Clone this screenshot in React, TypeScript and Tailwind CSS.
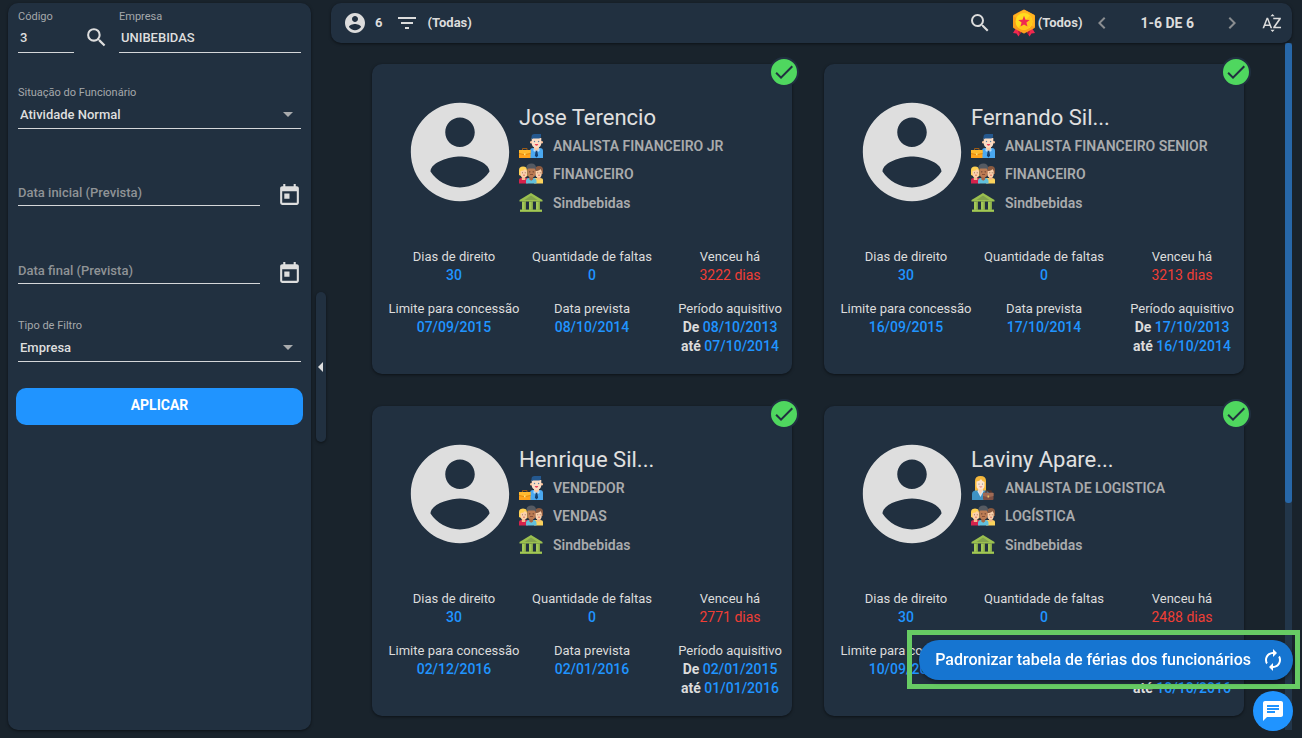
import React from "react";
import {
  MdArrowDropDown,
  MdArrowLeft,
  MdAutorenew,
  MdChat,
  MdCheck,
  MdChevronLeft,
  MdChevronRight,
  MdFilterList,
  MdSearch,
  MdSortByAlpha,
  MdToday,
} from "react-icons/md";

type Employee = {
  name: string;
  role: string;
  female?: boolean;
  department: string;
  overdue: string;
  limit: string;
  planned: string;
  from: string;
  to: string;
};

const employees: Employee[] = [
  { name: "Jose Terencio", role: "ANALISTA FINANCEIRO JR", department: "FINANCEIRO", overdue: "3222 dias", limit: "07/09/2015", planned: "08/10/2014", from: "08/10/2013", to: "07/10/2014" },
  { name: "Fernando Sil...", role: "ANALISTA FINANCEIRO SENIOR", department: "FINANCEIRO", overdue: "3213 dias", limit: "16/09/2015", planned: "17/10/2014", from: "17/10/2013", to: "16/10/2014" },
  { name: "Henrique Sil...", role: "VENDEDOR", department: "VENDAS", overdue: "2771 dias", limit: "02/12/2016", planned: "02/01/2016", from: "02/01/2015", to: "01/01/2016" },
  { name: "Laviny Apare...", role: "ANALISTA DE LOGISTICA", female: true, department: "LOGÍSTICA", overdue: "2488 dias", limit: "10/09/2017", planned: "11/10/2016", from: "11/10/2015", to: "10/10/2016" },
];

function AccountIcon({ size }: { size: number }) {
  return (
    <svg viewBox="0 0 24 24" width={size} height={size} fill="currentColor" className="shrink-0" aria-hidden="true">
      <path d="M12 2C6.480 2 2 6.480 2 12s4.480 10 10 10 10-4.480 10-10S17.520 2 12 2zm0 3c1.660 0 3 1.340 3 3s-1.340 3-3 3-3-1.340-3-3 1.340-3 3-3zm0 14.200c-2.500 0-4.710-1.280-6-3.220.030-1.990 4-3.080 6-3.080 1.990 0 5.970 1.090 6 3.080-1.290 1.940-3.500 3.220-6 3.220z" />
    </svg>
  );
}

function BusinessmanIcon() {
  return (
    <svg viewBox="0 0 24 24" className="size-6 shrink-0" aria-hidden="true">
      <path d="M11 24v-7q0-3 3-3h7q3 0 3 3v7z" fill="#4aa8f0" />
      <path d="M15 12h5v3l-2.500 2.500L15 15z" fill="#f7c9a5" />
      <path d="M14.500 14.500l3 2.500 3-2.500v2.500l-3 1.500-3-1.500z" fill="#b5dcfb" />
      <path d="M16.700 16.800h1.600l.8 5-1.600 1.800-1.600-1.800z" fill="#17406e" />
      <circle cx="12.200" cy="8.300" r="1.200" fill="#f7bd94" />
      <circle cx="22.800" cy="8.300" r="1.200" fill="#f7bd94" />
      <path d="M12.700 4h9.600v5q0 4.800-4.800 4.800T12.700 9z" fill="#fbdcc4" />
      <path d="M12.500 5.500V3Q12.500 0 15.500 0H22v2.500Q22 4.500 20 4.500h-6z" fill="#24588f" />
      <circle cx="15.500" cy="7.500" r=".7" fill="#5c7f9e" />
      <circle cx="19.600" cy="7.500" r=".7" fill="#5c7f9e" />
      <path d="M15.700 10h3.600q-.3 1.800-1.800 1.800T15.700 10z" fill="#e8445a" />
      <path d="M3.500 16v-1.500h4.500V16" fill="none" stroke="#9c5b16" />
      <rect y="16" width="11.500" height="8" fill="#ffa31c" />
      <path d="M0 16h11.500v3L6 20.500 0 19z" fill="#ffb92e" />
      <path d="M0 19.500l5.500 1.200 6-1.200" fill="none" stroke="#d67f08" strokeWidth=".7" />
      <rect x="5" y="19.500" width="1.500" height="1.800" fill="#ffe27a" />
    </svg>
  );
}

function BusinesswomanIcon() {
  return (
    <svg viewBox="0 0 24 24" className="size-6 shrink-0" aria-hidden="true">
      <path d="M4 15V5q0-5 5.500-5T15 5v10z" fill="#f5b83d" />
      <path d="M1 24v-6q0-3.500 4-3.500h9q4 0 4 3.500v6z" fill="#3e92c4" />
      <path d="M7 12h5v3l-2.500 4L7 15z" fill="#fbd3b2" />
      <path d="M5.500 5.500Q9 5 10 3q1 2.500 3.500 3v3.500q0 4-4 4t-4-4z" fill="#fde3cd" />
      <path d="M7.500 14.500l2 4 2-4 1.200.5-3.200 6-3.200-6z" fill="#dceaf2" />
      <circle cx="8" cy="8" r=".6" fill="#69808c" />
      <circle cx="11.500" cy="8" r=".6" fill="#69808c" />
      <path d="M8 10.500h3.500q-1.700 2-3.500 0z" fill="#e75f68" />
      <path d="M15 17v-2h5v2" fill="none" stroke="#5a3427" strokeWidth="1.200" />
      <rect x="12" y="16.500" width="10.500" height="7.500" rx="1" fill="#805044" />
      <path d="M12 17h10.500v3l-5.200 1.200L12 20z" fill="#a06a55" />
      <rect x="16.500" y="19.500" width="1.600" height="2" fill="#e9c46a" />
    </svg>
  );
}

function TeamIcon() {
  return (
    <svg viewBox="0 0 24 24" className="size-6 shrink-0" aria-hidden="true">
      <path d="M0 21.500V18q0-2 3-2h6v5.500z" fill="#d6224c" />
      <path d="M15 21.500V16h6q3 0 3 2v3.500z" fill="#fbd25c" />
      <path d="M0 13V8q0-3.500 4-3.500T8.500 8v6q-4 2-8.500-1z" fill="#ffd153" />
      <rect x="2.800" y="14" width="3.500" height="4" fill="#f7b98c" />
      <path d="M1.500 9Q5 9 6 7l2 2v3q0 3.500-3.200 3.500T1.500 12z" fill="#fbd0ab" />
      <path d="M16 12V8q0-4 4-4t4 4v4z" fill="#8a5a40" />
      <rect x="18" y="13.500" width="3.500" height="4" fill="#f2b284" />
      <path d="M16.300 9q4 0 5-2l1.400 2v3q0 3.500-3.200 3.500T16.300 12z" fill="#fbd0ab" />
      <path d="M7 21.500V19q0-3 3-3h4q3.500 0 3.500 3v2.500z" fill="#62c0dc" />
      <path d="M10.300 14h3.800v3.500l-1.900 1.300-1.900-1.300z" fill="#a86743" />
      <path d="M8.500 5h8v6q0 4.500-4 4.500t-4-4.500z" fill="#bb7b53" />
      <path d="M7.500 7.500V5Q8 1.500 12.500 1.500T17 6v2l-1.500-1.500h-6z" fill="#555a62" />
      <circle cx="10.800" cy="9.800" r=".6" fill="#4e3029" />
      <circle cx="14.200" cy="9.800" r=".6" fill="#4e3029" />
      <path d="M11 12.500h3" stroke="#7a4330" strokeWidth=".8" />
      <circle cx="3.500" cy="10.800" r=".5" fill="#7b5b4b" />
      <circle cx="6.200" cy="10.800" r=".5" fill="#7b5b4b" />
      <circle cx="18.800" cy="10.800" r=".5" fill="#7b5b4b" />
      <circle cx="21.200" cy="10.800" r=".5" fill="#7b5b4b" />
      <path d="M4 13.200h2M19 13.200h2" stroke="#d65e52" strokeWidth=".8" />
    </svg>
  );
}

function UnionIcon() {
  return (
    <svg viewBox="0 0 24 24" className="size-6 shrink-0" aria-hidden="true">
      <path d="M12 2l11.500 7v1.500H.5V9z" fill="#9bc04f" />
      <path d="M12 4.500L18.500 9h-13z" fill="#82a24c" />
      <path d="M3 10.500h4V19H3zM10 10.500h4V19h-4zM17 10.500h4V19h-4z" fill="#a3c957" />
      <path d="M5.500 10.500H7V19H5.500zM12.500 10.500H14V19h-1.500zM19.500 10.500H21V19h-1.500z" fill="#87a849" />
      <path d="M1 18.500h22V21H1z" fill="#8db14a" />
      <path d="M1 19.500h22" stroke="#a8ce5b" strokeWidth=".8" />
    </svg>
  );
}

function MedalIcon() {
  return (
    <svg viewBox="0 0 24 28" className="h-7 w-6 shrink-0" aria-hidden="true">
      <path d="M4 19L1 24l3.500.5L6.500 27.500l3.500-6zM20 19l3 5-3.500.5-2 3-3.500-6z" fill="#f0284f" />
      <path d="M5.500 20.500L9 23l-1.500 3zM18.500 20.500L15 23l1.500 3z" fill="#b5163a" />
      <path d="M12 2l9.500 5v11L12 23l-9.500-5V7z" fill="#fb9f1c" stroke="#fb9f1c" strokeWidth="3" strokeLinejoin="round" />
      <path d="M12 2l9.500 5v9.500L3 7z" fill="#ffb421" stroke="#ffb421" strokeWidth="2" strokeLinejoin="round" />
      <circle cx="12" cy="12.500" r="8.500" fill="#ffdc1e" />
      <path d="M18 6.500A8.500 8.500 0 0 1 6 18.500z" fill="#ffc61a" />
      <path d="M12 6.800l1.500 3.900 4.200.2-3.300 2.700 1.100 4-3.500-2.200-3.500 2.200 1.100-4-3.300-2.700 4.200-.2z" fill="#f02a50" />
    </svg>
  );
}

function Stat({ label, children }: { label: string; children: React.ReactNode }) {
  return (
    <div>
      <dt className="text-[13px] leading-[18px] whitespace-nowrap text-[#dcdcdc]">{label}</dt>
      <dd className="text-sm leading-[19px] font-medium text-[#2094ff]">{children}</dd>
    </div>
  );
}

function EmployeeCard({ employee }: { employee: Employee }) {
  return (
    <article className="relative h-[310px] w-[420px] rounded-[10px] bg-[#213040] pt-[29px] shadow-[0_1px_3px_rgba(0,0,0,0.5)]">
      <span className="absolute -top-[7px] -right-[7px] flex size-[30px] items-center justify-center rounded-full border-2 border-[#213040] bg-[#4fd75f] text-[#213040]">
        <MdCheck size={24} />
      </span>
      <div className="flex pl-[29px]">
        <span className="text-[#dedede]">
          <AccountIcon size={118} />
        </span>
        <div className="pt-[11px]">
          <h2 className="text-[22px] leading-[28px] text-[#e0e0e0]">{employee.name}</h2>
          <ul className="text-sm font-semibold text-[#a9abad]">
            <li className="flex h-7 items-center gap-[10px]">
              {employee.female ? <BusinesswomanIcon /> : <BusinessmanIcon />}
              {employee.role}
            </li>
            <li className="flex h-7 items-center gap-[10px]">
              <TeamIcon />
              {employee.department}
            </li>
            <li className="flex h-[30px] items-center gap-[10px]">
              <UnionIcon />
              Sindbebidas
            </li>
          </ul>
        </div>
      </div>
      <dl className="mt-[30px] grid grid-cols-[138px_138px_138px] gap-y-[15px] pl-[13px] text-center">
        <Stat label="Dias de direito">30</Stat>
        <Stat label="Quantidade de faltas">0</Stat>
        <Stat label="Venceu há">
          <span className="font-normal text-[#f03e35]">{employee.overdue}</span>
        </Stat>
        <Stat label="Limite para concessão">{employee.limit}</Stat>
        <Stat label="Data prevista">{employee.planned}</Stat>
        <Stat label="Período aquisitivo">
          <b className="text-[#dcdcdc]">De</b> {employee.from}
          <br />
          <b className="text-[#dcdcdc]">até</b> {employee.to}
        </Stat>
      </dl>
    </article>
  );
}

const labelClass = "block text-[11px] leading-[15px] text-[#a5a8ab]";
const fieldClass =
  "block h-[29px] w-full appearance-none border-b border-[#d5d7d9] bg-transparent px-[2px] text-[13px] font-medium text-[#dedede] outline-none";

function SelectField({ id, label, value }: { id: string; label: string; value: string }) {
  return (
    <div>
      <label htmlFor={id} className={labelClass}>{label}</label>
      <div className="relative pt-px">
        <select id={id} className="block h-7 w-full appearance-none border-b border-[#d5d7d9] bg-transparent px-[2px] text-[13px] font-medium text-[#dedede] outline-none" defaultValue={value}>
          <option>{value}</option>
        </select>
        <MdArrowDropDown size={24} className="pointer-events-none absolute top-[2px] right-[1px] text-[#a9abad]" />
      </div>
    </div>
  );
}

function DateField({ label }: { label: string }) {
  return (
    <div className="flex h-7 items-start justify-between">
      <input
        aria-label={label}
        placeholder={label}
        className="h-[26px] w-[242px] border-b border-[#d5d7d9] bg-transparent text-[13px] font-medium text-[#dedede] outline-none placeholder:text-[#8f9396]"
      />
      <button type="button" aria-label={"Abrir calendário: " + label} className="-mr-px self-end text-[#dedede]">
        <MdToday size={25} />
      </button>
    </div>
  );
}

function Sidebar() {
  return (
    <form className="w-[303px] shrink-0 rounded-[10px] bg-[#213040] px-[10px] pt-[6px] shadow-[0_1px_3px_rgba(0,0,0,0.5)]">
      <div className="flex items-end">
        <div className="w-14">
          <label htmlFor="codigo" className={labelClass}>Código</label>
          <input id="codigo" defaultValue="3" className={fieldClass + " pb-[2px]"} />
        </div>
        <button type="button" aria-label="Pesquisar empresa" className="mx-[10px] mb-[3px] text-[#dedede]">
          <MdSearch size={25} />
        </button>
        <div className="flex-1">
          <label htmlFor="empresa" className={labelClass}>Empresa</label>
          <input id="empresa" defaultValue="UNIBEBIDAS" className={fieldClass + " pb-[2px]"} />
        </div>
      </div>
      <div className="mt-8">
        <SelectField id="situacao" label="Situação do Funcionário" value="Atividade Normal" />
      </div>
      <div className="mt-[51px] flex flex-col gap-[50px]">
        <DateField label="Data inicial (Prevista)" />
        <DateField label="Data final (Prevista)" />
      </div>
      <div className="mt-8">
        <SelectField id="filtro" label="Tipo de Filtro" value="Empresa" />
      </div>
      <div className="-mx-[2px] mt-[26px]">
        <button type="button" className="h-[37px] w-full rounded-[10px] bg-[#2094ff] pb-1 text-sm font-bold text-white">
          APLICAR
        </button>
      </div>
    </form>
  );
}

function Toolbar() {
  return (
    <header className="flex h-10 shrink-0 items-center rounded-[10px] bg-[#213040] pr-[9px] pl-3 text-[13px] font-bold text-[#dcdcdc] shadow-[0_1px_3px_rgba(0,0,0,0.5)]">
      <AccountIcon size={24} />
      <span className="ml-2">6</span>
      <button aria-label="Filtrar" className="mr-2 ml-[13px]">
        <MdFilterList size={24} />
      </button>
      <span>(Todas)</span>
      <div className="ml-auto flex items-center">
        <button aria-label="Pesquisar" className="mr-5">
          <MdSearch size={24} />
        </button>
        <MedalIcon />
        <span className="ml-[2px]">(Todos)</span>
        <button aria-label="Página anterior" className="ml-2 text-[#8a8d90]">
          <MdChevronLeft size={24} />
        </button>
        <span className="mx-[26px] text-sm">1-6 DE 6</span>
        <button aria-label="Próxima página" className="text-[#8a8d90]">
          <MdChevronRight size={24} />
        </button>
        <button aria-label="Ordenar" className="ml-[17px]">
          <MdSortByAlpha size={22} />
        </button>
      </div>
    </header>
  );
}

export default function App() {
  return (
    <div className="flex h-screen overflow-hidden bg-[#19232c] pt-[3px] pr-[10px] pb-2 pl-2 font-[Roboto,sans-serif]">
      <Sidebar />
      <button
        aria-label="Recolher filtros"
        className="mx-[5px] flex h-[150px] w-[10px] shrink-0 items-center justify-center self-center rounded-[5px] bg-[#213040] text-[#dedede] shadow-[0_1px_3px_rgba(0,0,0,0.5)]"
      >
        <MdArrowLeft size={24} className="shrink-0" />
      </button>
      <main className="flex min-w-0 flex-1 flex-col">
        <Toolbar />
        <div className="flex min-h-0 flex-1">
          <section className="flex flex-1 flex-wrap content-start justify-center gap-8 pt-[21px]">
            {employees.map((employee) => (
              <EmployeeCard key={employee.name} employee={employee} />
            ))}
          </section>
          <div className="w-[7px] bg-[#22364a]">
            <div className="h-[67%] rounded-[3px] bg-[#2767a8]" />
          </div>
        </div>
      </main>
      <div className="fixed right-[2px] bottom-[49px] border-[5px] border-[#67cb64] pt-[5px] pr-[2px] pb-1 pl-[7px]">
        <button className="flex h-10 items-center gap-[10px] rounded-full bg-[#1675d1] pr-2 pl-4 text-base font-medium text-white shadow-[0_2px_4px_rgba(0,0,0,0.4)]">
          Padronizar tabela de férias dos funcionários
          <MdAutorenew size={24} />
        </button>
      </div>
      <button aria-label="Abrir chat" className="fixed right-[9px] bottom-[7px] flex size-10 items-center justify-center rounded-full bg-[#2094ff] text-white">
        <MdChat size={24} />
      </button>
    </div>
  );
}
